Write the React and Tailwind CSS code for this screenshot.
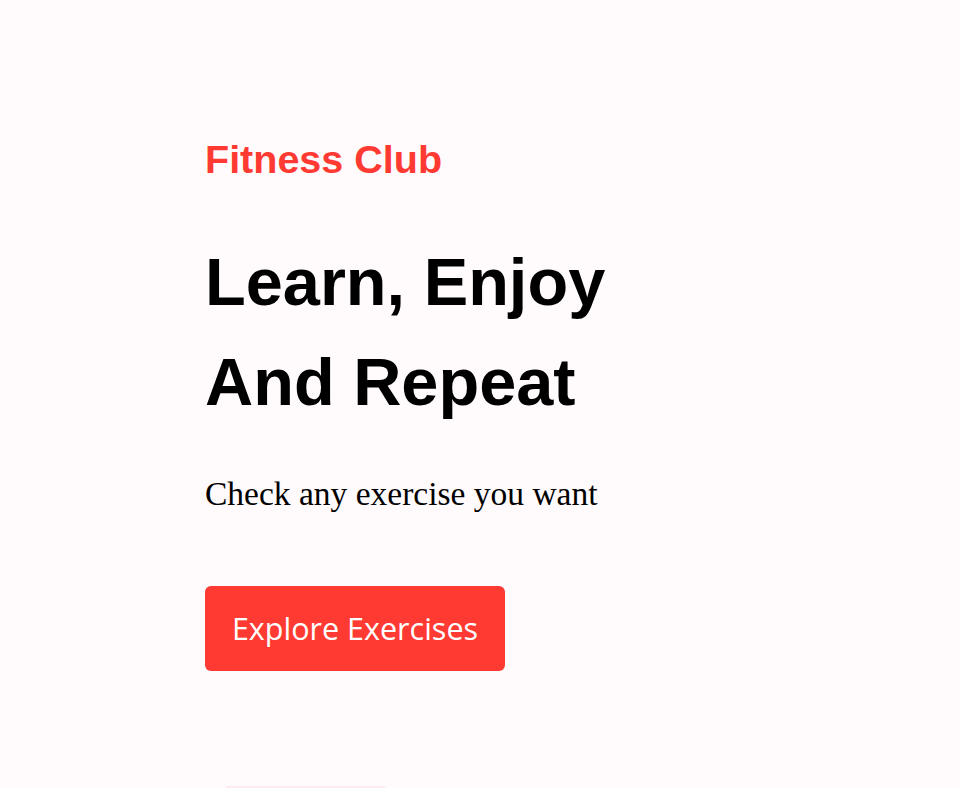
import React from 'react';

const App = () => {
    return (
        <div className="min-h-[788px] h-[788px] overflow-hidden bg-[#fffafb]">
            <div className="pl-[205px] pt-[130px]">
                <p className="font-['Liberation_Sans',Arial,sans-serif] font-bold text-[39.5px] leading-[58.5px] text-[#ff3a33]">
                    Fitness Club
                </p>
                <h1 className="mt-[43.5px] font-['Liberation_Sans',Arial,sans-serif] font-bold text-[66.7px] leading-[100px] text-black">
                    Learn, Enjoy <br /> And Repeat
                </h1>
                <p className="mt-[37px] font-['Liberation_Serif','Times_New_Roman',serif] text-[33.5px] leading-[49.5px] text-black">
                    Check any exercise you want
                </p>
                <button className="mt-[67.5px] w-[300px] h-[85px] rounded-[6px] bg-[#ff3a33] text-white font-['Open_Sans',sans-serif] text-[30.5px] flex items-center justify-center">
                    Explore Exercises
                </button>
                <div className="mt-[115px] ml-[21px] w-[159px] h-[4px] bg-[#fcebed]"></div>
            </div>
        </div>
    );
};

export default App;
